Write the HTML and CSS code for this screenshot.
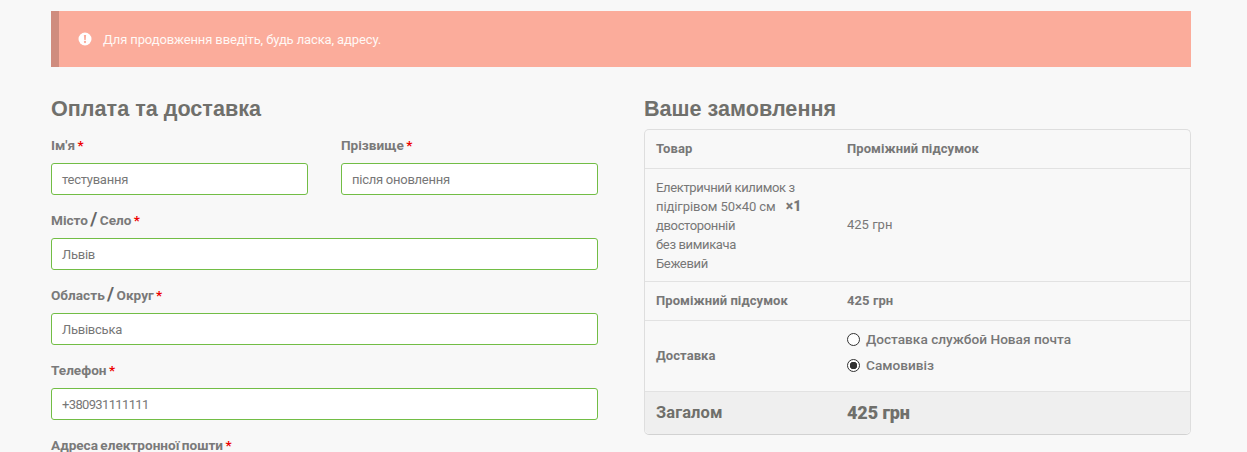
FILE: index.html
```html
<!DOCTYPE html>
<html lang="uk">
<head>
<meta charset="utf-8">
<title>Оплата та доставка</title>
<link rel="stylesheet" href="styles.css">
</head>
<body>
<div class="page">
  <div class="alert">
    <svg class="alert-icon" viewBox="0 0 14 14" width="14" height="14" aria-hidden="true">
      <circle cx="7" cy="7" r="6.5" fill="#fff"/>
      <path d="M5.9 3h2.2l-.35 5H6.25z" fill="#fbac9b"/>
      <circle cx="7" cy="10" r="1.15" fill="#fbac9b"/>
    </svg>
    <span>Для продовження введіть, будь ласка, адресу.</span>
  </div>
  <div class="columns">
    <section class="billing">
      <h3 class="title">Оплата та доставка</h3>
      <div class="name-row">
        <div class="field">
          <label class="label">Ім'я <span class="req">*</span></label>
          <div class="input">тестування</div>
        </div>
        <div class="field">
          <label class="label">Прізвище <span class="req">*</span></label>
          <div class="input">після оновлення</div>
        </div>
      </div>
      <div class="field">
        <label class="label">Місто <span class="slash">/</span> Село <span class="req">*</span></label>
        <div class="input">Львів</div>
      </div>
      <div class="field">
        <label class="label">Область <span class="slash">/</span> Округ <span class="req">*</span></label>
        <div class="input">Львівська</div>
      </div>
      <div class="field">
        <label class="label">Телефон <span class="req">*</span></label>
        <div class="input phone">+380931111111</div>
      </div>
      <div class="field">
        <label class="label">Адреса електронної пошти <span class="req">*</span></label>
      </div>
    </section>
    <section class="order">
      <h3 class="title">Ваше замовлення</h3>
      <table class="order-table">
        <colgroup><col class="col-a"><col></colgroup>
        <tr class="row-head"><th>Товар</th><th>Проміжний підсумок</th></tr>
        <tr class="row-item">
          <td><span class="item-name">Електричний килимок з</span><br><span class="item-size">підігрівом 50×40 см</span> <strong class="qty">×1</strong><br><span class="item-name">двосторонній<br>без вимикача<br>Бежевий</span></td>
          <td class="item-price">425 грн</td>
        </tr>
        <tr class="row-sub"><th>Проміжний підсумок</th><th>425 грн</th></tr>
        <tr class="row-ship">
          <th>Доставка</th>
          <td>
            <div class="ship-opt"><span class="radio"></span>Доставка службой Новая почта</div>
            <div class="ship-opt"><span class="radio on"></span>Самовивіз</div>
          </td>
        </tr>
        <tr class="row-total"><th>Загалом</th><th class="total-price">425 грн</th></tr>
      </table>
    </section>
  </div>
</div>
</body>
</html>
```

FILE: styles.css
```css
html, body { margin: 0; padding: 0; background: #f8f8f8; }
body { height: 452px; overflow: hidden; font-family: Roboto, "Liberation Sans", sans-serif; color: #777; }
.page { width: 1140px; margin-left: 51px; padding-top: 11px; }
.alert { box-sizing: border-box; height: 56px; display: flex; align-items: center; gap: 11px; padding-left: 19px; background: #fbac9b; border-left: 8px solid #cf8c7e; color: #fff8f5; font-size: 13px; letter-spacing: -.12px; }
.alert-icon { flex: none; }
.columns { display: grid; grid-template-columns: 547px 547px; column-gap: 46px; }
.title { margin: 30px 0 0; height: 32px; line-height: 24px; font-family: "Liberation Sans", Arial, sans-serif; font-size: 21.6px; font-weight: 700; color: #70706c; }
.billing .title { height: 41px; }
.name-row { display: grid; grid-template-columns: 257px 257px; column-gap: 33px; }
.field { height: 75px; }
.label { display: block; height: 25px; line-height: 14px; font-size: 13.6px; font-weight: 700; color: #7a7a7a; word-spacing: -1px; }
.req { color: #e00; }
.slash { font-size: 19px; line-height: 1px; color: #666; }
.input { box-sizing: border-box; height: 32px; padding: 0 10px; display: flex; align-items: center; background: #fff; border: 1px solid #72bd45; border-radius: 3px; font-size: 13px; letter-spacing: -.25px; color: #777; }
.input.phone { letter-spacing: -.65px; }
.order-table { width: 547px; table-layout: fixed; border-collapse: separate; border-spacing: 0; border: 1px solid #dedede; border-bottom-color: #d2d2d2; border-radius: 5px; font-size: 13px; color: #777; }
.col-a { width: 191px; }
.order-table th, .order-table td { padding: 0 11px 2px; text-align: left; vertical-align: middle; border-bottom: 1px solid #e2e2e2; font-weight: 400; }
.order-table th { font-weight: 700; letter-spacing: .08px; }
.row-head th { height: 36px; }
.order-table .row-item td { padding-bottom: 0; height: 112px; line-height: 19px; }
.order-table .row-item .item-price { padding-bottom: 2px; height: 110px; }
.item-name { letter-spacing: -.35px; }
.item-size { letter-spacing: -.08px; }
.qty { margin-left: 7px; font-size: 14px; font-weight: 900; }
.row-sub th { height: 36px; }
.row-ship th { height: 68px; }
.order-table .row-ship td { padding-bottom: 8px; height: 62px; font-weight: 500; }
.ship-opt { display: flex; align-items: center; gap: 6px; height: 26px; font-size: 13.65px; }
.radio { box-sizing: border-box; width: 13px; height: 13px; border: 1px solid #333; border-radius: 50%; background: #fff; }
.radio.on { background: radial-gradient(circle, #333 0 3.5px, #fff 4px); }
.order-table .row-total th { height: 40px; background: #efefef; font-size: 16.5px; border-bottom: 0; color: #6f6f6b; }
.order-table .row-total .total-price { font-size: 18px; font-weight: 900; letter-spacing: -.1px; }
.row-total th:first-child { border-bottom-left-radius: 5px; }
.row-total th:last-child { border-bottom-right-radius: 5px; }
```
